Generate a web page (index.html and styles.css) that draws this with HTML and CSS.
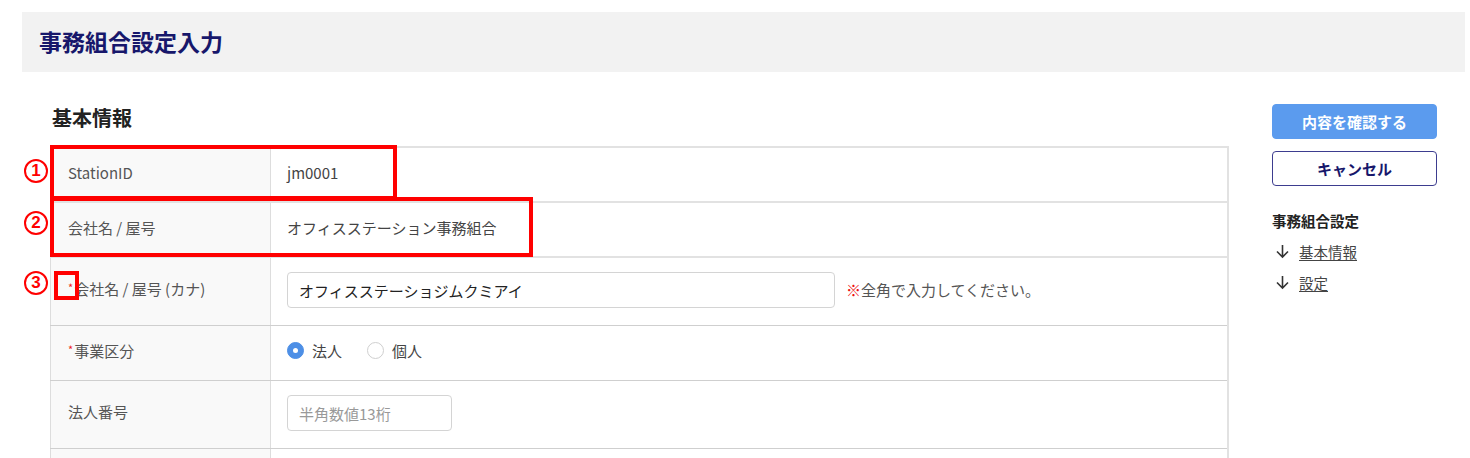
FILE: index.html
```html
<!DOCTYPE html>
<html lang="ja">
<head>
<meta charset="utf-8">
<title>事務組合設定入力</title>
<link rel="stylesheet" href="styles.css">
</head>
<body>
<div class="page">
  <header class="page-header">
    <h1 class="page-title">事務組合設定入力</h1>
  </header>
  <div class="content">
    <main class="main">
      <h2 class="section-title">基本情報</h2>
      <table class="form-table">
        <tr class="row-short">
          <th>StationID</th>
          <td>jm0001</td>
        </tr>
        <tr class="row-short">
          <th>会社名 / 屋号</th>
          <td>オフィスステーション事務組合</td>
        </tr>
        <tr class="row-tall">
          <th><span class="req">*</span>会社名 / 屋号 (カナ)</th>
          <td>
            <div class="field-line">
              <input class="text-input wide" type="text" value="オフィスステーショジムクミアイ">
              <span class="note"><span class="note-mark">※</span>全角で入力してください。</span>
            </div>
          </td>
        </tr>
        <tr class="row-short">
          <th><span class="req">*</span>事業区分</th>
          <td>
            <div class="radios">
              <label class="radio"><span class="radio-dot checked"></span>法人</label>
              <label class="radio"><span class="radio-dot"></span>個人</label>
            </div>
          </td>
        </tr>
        <tr class="row-tall">
          <th>法人番号</th>
          <td><input class="text-input narrow" type="text" placeholder="半角数値13桁"></td>
        </tr>
        <tr class="row-tall">
          <th></th>
          <td></td>
        </tr>
      </table>
    </main>
    <aside class="sidebar">
      <button class="btn btn-primary">内容を確認する</button>
      <button class="btn btn-outline">キャンセル</button>
      <div class="toc-title">事務組合設定</div>
      <ul class="toc">
        <li><span class="arrow"><svg width="15" height="15" viewBox="0 0 15 15"><path d="M7.5 1v12M2 7.5l5.5 5.5 5.5-5.5" fill="none" stroke="#333" stroke-width="1.6"/></svg></span><a href="#">基本情報</a></li>
        <li><span class="arrow"><svg width="15" height="15" viewBox="0 0 15 15"><path d="M7.5 1v12M2 7.5l5.5 5.5 5.5-5.5" fill="none" stroke="#333" stroke-width="1.6"/></svg></span><a href="#">設定</a></li>
      </ul>
    </aside>
  </div>

  <div class="anno-box box1"></div>
  <div class="anno-box box2"></div>
  <div class="anno-box box3"></div>
  <span class="anno-num num1">1</span>
  <span class="anno-num num2">2</span>
  <span class="anno-num num3">3</span>
</div>
</body>
</html>
```

FILE: styles.css
```css
* { box-sizing: border-box; }
html, body { margin: 0; padding: 0; background: #fff; }
body {
  font-family: "Noto Sans CJK JP", "Noto Sans", sans-serif;
  color: #333;
  overflow: hidden;
  height: 458px;
}
.page {
  position: relative;
  width: 1470px;
  padding-top: 12px;
}
.page-header {
  margin: 0 5px 0 22px;
  height: 60px;
  background: #f2f2f2;
  display: flex;
  align-items: center;
  padding-left: 17px;
  padding-bottom: 2px;
}
.page-title {
  margin: 0;
  font-size: 23px;
  font-weight: 700;
  color: #17176b;
  letter-spacing: 0;
}
.content {
  display: flex;
  padding-left: 50px;
  padding-top: 32px;
}
.main {
  width: 1179px;
}
.section-title {
  margin: 0 0 14px 2px;
  font-size: 20px;
  font-weight: 700;
  color: #222;
  line-height: 28px;
}
.form-table {
  width: 100%;
  border-collapse: collapse;
  border-top: 2px solid #e2e2e2;
  border-right: 2px solid #e2e2e2;
}
.form-table th,
.form-table td {
  border-bottom: 1px solid #cfcfcf;
  font-size: 15px;
  line-height: 20px;
  padding: 0 0 4px 0;
  vertical-align: middle;
}
.form-table tr:nth-child(1) th, .form-table tr:nth-child(1) td,
.form-table tr:nth-child(2) th, .form-table tr:nth-child(2) td {
  border-bottom: 2px solid #e2e2e2;
}
.form-table th {
  width: 220px;
  background: #f9f9f9;
  color: #555;
  font-weight: 400;
  text-align: left;
  padding-left: 17px;
  border-left: 1px solid #ddd;
  border-right: 1px solid #ddd;
}
.form-table td {
  padding-left: 16px;
  color: #444;
}
.row-tall td { padding-bottom: 2px; }
.row-short { height: 55px; }
.row-tall { height: 68px; }
.req {
  color: #e22;
  font-size: 11px;
  vertical-align: top;
  margin-right: 1px;
  position: relative;
  top: -2px;
}
.field-line {
  display: flex;
  align-items: center;
}
.text-input {
  height: 36px;
  border: 1px solid #d4d4d4;
  border-radius: 4px;
  padding: 0 11px;
  font-family: "Noto Sans CJK JP", "Noto Sans", sans-serif;
  font-size: 15px;
  color: #222;
  background: #fff;
  outline: none;
}
.text-input.wide { width: 548px; }
.text-input.narrow { width: 165px; font-size: 15px; }
.text-input::placeholder { color: #999; }
.note {
  margin-left: 11px;
  font-size: 15px;
  color: #555;
}
.note-mark { color: #ee1111; }
.radios {
  display: flex;
  align-items: center;
  gap: 25px;
}
.radio {
  display: flex;
  align-items: center;
  gap: 8px;
  color: #444;
}
.radio-dot {
  width: 17px;
  height: 17px;
  border-radius: 50%;
  border: 1px solid #cfcfcf;
  background: #fff;
  display: inline-block;
  position: relative;
}
.radio-dot.checked {
  background: #4d8fe6;
  border-color: #4d8fe6;
}
.radio-dot.checked::after {
  content: "";
  position: absolute;
  left: 5px;
  top: 5px;
  width: 5px;
  height: 5px;
  border-radius: 50%;
  background: #fff;
}
.sidebar {
  margin-left: 43px;
  width: 165px;
  display: flex;
  flex-direction: column;
}
.btn {
  height: 35px;
  border-radius: 4px;
  font-family: "Noto Sans CJK JP", "Noto Sans", sans-serif;
  font-size: 15px;
  font-weight: 700;
  cursor: pointer;
}
.btn-primary {
  background: #5b9bee;
  border: 1px solid #5b9bee;
  color: #fff;
}
.btn-outline {
  margin-top: 12px;
  background: #fff;
  border: 1px solid #3d3d8f;
  color: #17176b;
}
.toc-title {
  margin-top: 25px;
  font-size: 14.5px;
  font-weight: 700;
  color: #222;
  line-height: 20px;
}
.toc {
  list-style: none;
  margin: 5px 0 0 0;
  padding: 0;
}
.toc li {
  display: flex;
  align-items: center;
  height: 31px;
  font-size: 14.5px;
}
.toc .arrow {
  width: 27px;
  padding-left: 3px;
  display: flex;
  align-items: center;
}
.toc a {
  color: #444;
  text-decoration: underline;
  text-underline-offset: 2px;
}
.anno-box {
  position: absolute;
  border: 4px solid #ff0000;
}
.box1 { left: 50px; top: 145px; width: 347px; height: 55px; }
.box2 { left: 50px; top: 197px; width: 483px; height: 60px; }
.box3 { left: 54px; top: 271px; width: 25px; height: 29px; }
.anno-num {
  position: absolute;
  left: 24px;
  width: 24px;
  height: 24px;
  border: 2.5px solid #ff0000;
  border-radius: 50%;
  color: #ff0000;
  font-family: "Liberation Sans", Arial, sans-serif;
  font-size: 17px;
  font-weight: 700;
  line-height: 19px;
  text-align: center;
}
.num1 { top: 159px; }
.num2 { top: 211px; }
.num3 { top: 271px; }
```
